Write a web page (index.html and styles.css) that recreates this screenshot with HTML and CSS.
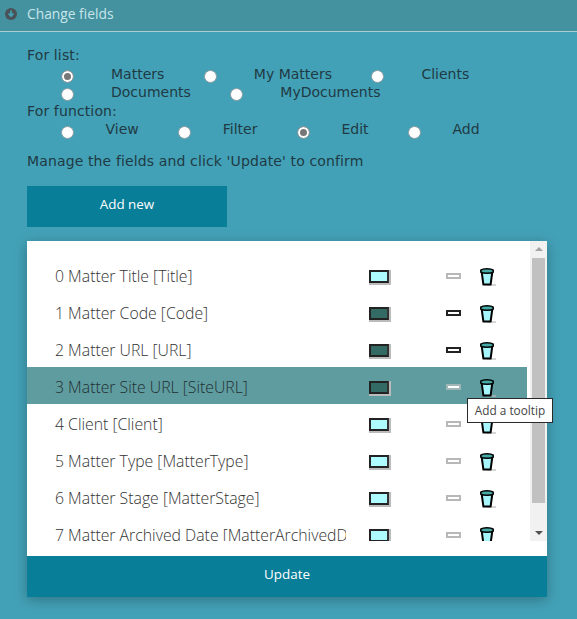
FILE: index.html
```html
<!DOCTYPE html>
<html lang="en">
<head>
  <meta charset="UTF-8">
  <meta name="viewport" content="width=device-width, initial-scale=1.0">
  <title>Change fields</title>
  <link rel="stylesheet" href="styles.css">
</head>
<body>

<svg class="defs" width="0" height="0" aria-hidden="true">
  <symbol id="cup" viewBox="0 0 16 18">
    <path d="M7 17h9" stroke="#bbb" stroke-width="1.2" fill="none"/>
    <path d="M1.6 3.4 3.4 16.6h7.2l1.8-13.2z" fill="#a6f5fb" stroke="#000" stroke-width="2" stroke-linejoin="round"/>
    <path d="M.8 2.2C3 .4 11 .4 13.2 2.2v2C11 5.6 3 5.6 .8 4.2z" fill="#45a9a5" stroke="#000" stroke-width="1.5"/>
  </symbol>
</svg>

<header class="top-bar">
  <svg class="collapse-icon" width="12" height="12" viewBox="0 0 12 12">
    <circle cx="6" cy="6" r="6" fill="#4a5257"/>
    <path d="M6 2.5v5M3.5 5.5 6 8.2l2.5-2.7" fill="none" stroke="#43a1b7" stroke-width="1.7"/>
  </svg>
  <span>Change fields</span>
</header>

<main class="content">
  <div class="field-label">For list:</div>
  <div class="radio-group list-group">
    <label><input type="radio" name="list" checked><span>Matters</span></label>
    <label><input type="radio" name="list"><span>My Matters</span></label>
    <label><input type="radio" name="list"><span>Clients</span></label>
    <label><input type="radio" name="list"><span>Documents</span></label>
    <label><input type="radio" name="list"><span>MyDocuments</span></label>
  </div>
  <div class="field-label">For function:</div>
  <div class="radio-group function-group">
    <label><input type="radio" name="func"><span>View</span></label>
    <label><input type="radio" name="func"><span>Filter</span></label>
    <label><input type="radio" name="func" checked><span>Edit</span></label>
    <label><input type="radio" name="func"><span>Add</span></label>
  </div>
  <p class="hint">Manage the fields and click 'Update' to confirm</p>
  <button class="btn add-btn" type="button">Add new</button>

  <section class="panel">
    <div class="panel-body">
      <ul class="field-list">
        <li class="row"><span class="row-name">0 Matter Title [Title]</span><i class="box"></i><i class="dash"></i><svg class="cup"><use href="#cup"/></svg></li>
        <li class="row on"><span class="row-name">1 Matter Code [Code]</span><i class="box"></i><i class="dash"></i><svg class="cup"><use href="#cup"/></svg></li>
        <li class="row on"><span class="row-name">2 Matter URL [URL]</span><i class="box"></i><i class="dash"></i><svg class="cup"><use href="#cup"/></svg></li>
        <li class="row selected"><span class="row-name">3 Matter Site URL [SiteURL]</span><i class="box"></i><i class="dash"></i><svg class="cup"><use href="#cup"/></svg></li>
        <li class="row"><span class="row-name">4 Client [Client]</span><i class="box"></i><i class="dash"></i><svg class="cup"><use href="#cup"/></svg></li>
        <li class="row"><span class="row-name">5 Matter Type [MatterType]</span><i class="box"></i><i class="dash"></i><svg class="cup"><use href="#cup"/></svg></li>
        <li class="row"><span class="row-name">6 Matter Stage [MatterStage]</span><i class="box"></i><i class="dash"></i><svg class="cup"><use href="#cup"/></svg></li>
        <li class="row"><span class="row-name">7 Matter Archived Date [MatterArchivedDate]</span><i class="box"></i><i class="dash"></i><svg class="cup"><use href="#cup"/></svg></li>
      </ul>
      <div class="scrollbar">
        <div class="arrow up"></div>
        <div class="track"><div class="thumb"></div></div>
        <div class="arrow down"></div>
      </div>
    </div>
    <button class="btn update-btn" type="button">Update</button>
    <div class="tooltip">Add a tooltip</div>
  </section>
</main>

</body>
</html>
```

FILE: styles.css
```css
* {
  box-sizing: border-box;
}

html, body {
  height: 100%;
}

body {
  margin: 0;
  overflow: hidden;
  background-color: #43a1b7;
  font-family: "DejaVu Sans", sans-serif;
  color: #1f3a44;
}

.defs {
  position: absolute;
}

.top-bar {
  display: flex;
  align-items: center;
  gap: 10px;
  height: 32px;
  padding: 0 0 4px 5px;
  background-color: #44919f;
  border-bottom: 1px solid #a9cdd3;
  font-family: "Open Sans", sans-serif;
  font-size: 13.8px;
  color: #c8e6ea;
}

.content {
  padding: 14px 30px 0 27px;
}

.field-label {
  height: 18px;
  font-size: 14px;
  letter-spacing: 0.13px;
  line-height: 18px;
}

.radio-group {
  display: flex;
  flex-wrap: wrap;
  padding-left: 34px;
  font-size: 14px;
  line-height: 18px;
}

.list-group {
  padding: 1px 0 1px 34px;
}

.radio-group label {
  display: flex;
  height: 18px;
}

.radio-group input {
  appearance: none;
  width: 13px;
  height: 13px;
  margin: 5px 0 0;
  background-color: #fff;
  border: 1px solid #8a9ba0;
  border-radius: 50%;
}

.radio-group input:checked {
  background-color: #777;
  box-shadow: inset 0 0 0 2px #fff;
}

.list-group label {
  margin-right: 39.5px;
}

.list-group span {
  margin-left: 37px;
}

.function-group input {
  margin-top: 6px;
}

.function-group label {
  margin-right: 39.5px;
}

.function-group span {
  margin-left: 31.5px;
}

.hint {
  margin: 14px 0 16px;
  font-size: 14px;
  letter-spacing: 0.13px;
  line-height: 18px;
}

.btn {
  display: block;
  height: 41px;
  padding: 0 0 6px;
  background-color: #087e99;
  color: #fff;
  border: none;
  font-family: "Open Sans", sans-serif;
  font-size: 13.4px;
}

.add-btn {
  width: 200px;
}

.panel {
  position: relative;
  width: 520px;
  margin-top: 14px;
  background-color: #fff;
  box-shadow: 0 3px 12px rgba(0, 0, 0, 0.28);
}

.panel-body {
  display: flex;
  height: 315px;
  padding-bottom: 15px;
}

.field-list {
  flex: 1;
  margin: 0;
  padding: 15px 0 0;
  overflow: hidden;
  list-style: none;
}

.row {
  display: flex;
  align-items: center;
  width: 500px;
  height: 37px;
  padding: 2px 0 0 28px;
  font-family: "Open Sans", sans-serif;
  font-weight: 300;
  font-size: 15.8px;
  color: #333;
}

.row-name {
  flex: none;
  width: 291px;
  overflow: hidden;
  white-space: nowrap;
}

.row.selected {
  background-color: #5f9ca0;
  color: #1f2f30;
}

.box {
  width: 20px;
  height: 13px;
  margin: 1px 0 0 23px;
  background-color: #aefcff;
  border: 2px solid #222;
  border-right-color: #333;
  box-shadow: 1px 1px 0 1px #bbb;
}

.row.on .box,
.row.selected .box {
  background-color: #336b64;
}

.dash {
  width: 15px;
  height: 6px;
  margin: 1px 0 0 57px;
  background-color: #fff;
  border: 2px solid #b8b8b8;
}

.row.on .dash {
  border-color: #222;
}

.row.selected .dash {
  border-color: #9fb5b6;
}

.cup {
  width: 16px;
  height: 18px;
  margin: 3px 0 0 19px;
}

.scrollbar {
  display: flex;
  flex-direction: column;
  flex: none;
  width: 17px;
  background-color: #f1f1f1;
}

.arrow {
  flex: none;
  height: 17px;
  position: relative;
}

.arrow::after {
  content: "";
  position: absolute;
  left: 5px;
  border-left: 4px solid transparent;
  border-right: 4px solid transparent;
}

.arrow.up::after {
  top: 6px;
  border-bottom: 4px solid #a3a3a3;
}

.arrow.down::after {
  top: 7px;
  border-top: 4px solid #505050;
}

.track {
  flex: 1;
  padding: 0 2px;
}

.thumb {
  height: 245px;
  background-color: #c1c1c1;
}

.update-btn {
  width: 100%;
}

.tooltip {
  position: absolute;
  left: 440px;
  top: 157px;
  width: 86px;
  height: 25px;
  background-color: #fff;
  border: 1px solid #2a2a2a;
  font-family: "Open Sans", sans-serif;
  font-size: 11.8px;
  line-height: 23px;
  text-align: center;
  color: #444;
}
```
